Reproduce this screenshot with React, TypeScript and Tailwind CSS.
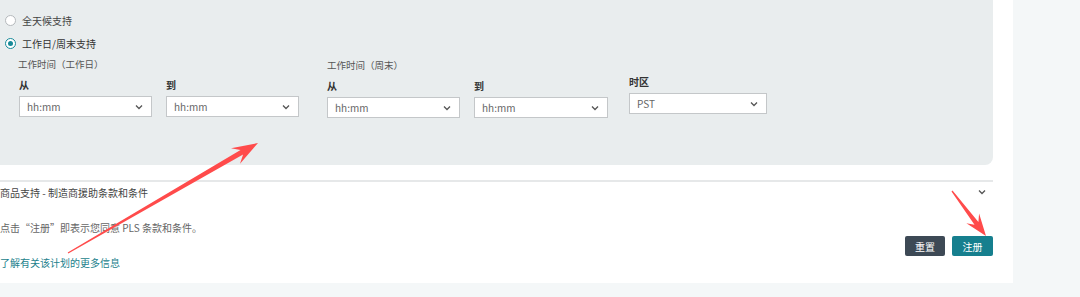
import React from 'react';

const font = { fontFamily: '"Noto Sans CJK SC", "Noto Sans", sans-serif' };

function Chevron({ className = '' }: { className?: string }) {
  return (
    <svg width="8" height="6" viewBox="0 0 8 6" className={className}>
      <polyline points="1,1.5 4,4.5 7,1.5" fill="none" stroke="#555" strokeWidth="1.3" />
    </svg>
  );
}

function TimeSelect({ value, width }: { value: string; width: string }) {
  return (
    <div
      className={`${width} h-[21px] bg-white border border-[#c4c7c9] flex items-center justify-between pl-[7px] pr-[8px] text-[10px] text-[#666]`}
    >
      <span>{value}</span>
      <Chevron />
    </div>
  );
}

function Field({ label, value, width }: { label: string; value: string; width: string }) {
  return (
    <div className="flex flex-col">
      <div className="h-[12px] leading-[12px] text-[10px] font-bold text-[#333] mb-[5px]">{label}</div>
      <TimeSelect value={value} width={width} />
    </div>
  );
}

function Arrow({ tail, tip, head, half, neck }: { tail: [number, number]; tip: [number, number]; head: number; half: number; neck: number }) {
  const dx = tip[0] - tail[0];
  const dy = tip[1] - tail[1];
  const len = Math.hypot(dx, dy);
  const ux = dx / len;
  const uy = dy / len;
  const nx = -uy;
  const ny = ux;
  const p = (x: number, y: number) => `${x.toFixed(1)},${y.toFixed(1)}`;
  const nk = [tip[0] - ux * head * 0.72, tip[1] - uy * head * 0.72];
  const bk = [tip[0] - ux * head, tip[1] - uy * head];
  const pts = [
    p(tail[0] + nx * 0.6, tail[1] + ny * 0.6),
    p(nk[0] + nx * neck, nk[1] + ny * neck),
    p(bk[0] + nx * half, bk[1] + ny * half),
    p(tip[0], tip[1]),
    p(bk[0] - nx * half, bk[1] - ny * half),
    p(nk[0] - nx * neck, nk[1] - ny * neck),
    p(tail[0] - nx * 0.6, tail[1] - ny * 0.6),
  ].join(' ');
  return <polygon points={pts} fill="#ff4b4b" />;
}

export default function App() {
  return (
    <div className="relative w-[1080px] h-[297px] bg-[#f4f7f8] overflow-hidden" style={font}>
      <div className="w-[1013px] h-[283px] bg-white overflow-hidden pr-[20px]">
        {/* support hours panel */}
        <div className="h-[165px] bg-[#e9edee] rounded-br-[8px] pt-[13px] pl-[5px]">
          <label className="flex items-center h-[14px] gap-[6px] text-[10px] text-[#444]">
            <span className="w-[11px] h-[11px] rounded-full border border-[#b5b9bc] bg-white" />
            全天候支持
          </label>
          <label className="flex items-center h-[14px] gap-[6px] text-[10px] text-[#333] mt-[9px]">
            <span className="w-[11px] h-[11px] rounded-full border border-[#178a99] bg-white flex items-center justify-center">
              <span className="w-[5px] h-[5px] rounded-full bg-[#178a99]" />
            </span>
            工作日/周末支持
          </label>

          <div className="flex items-start mt-[8px] pl-[13px]">
            <div className="flex flex-col">
              <div className="h-[12px] leading-[12px] text-[9.5px] text-[#555] mb-[9px]">工作时间（工作日）</div>
              <div className="flex gap-[14px] pl-[1px]">
                <Field label="从" value="hh:mm" width="w-[133px]" />
                <Field label="到" value="hh:mm" width="w-[133px]" />
              </div>
            </div>
            <div className="flex flex-col ml-[28px]">
              <div className="h-[12px] leading-[12px] text-[9.5px] text-[#555] mb-[9px] mt-[1px]">工作时间（周末）</div>
              <div className="flex gap-[14px]">
                <Field label="从" value="hh:mm" width="w-[133px]" />
                <Field label="到" value="hh:mm" width="w-[134px]" />
              </div>
            </div>
            <div className="flex flex-col ml-[21px] mt-[18px]">
              <Field label="时区" value="PST" width="w-[138px]" />
            </div>
          </div>
        </div>

        {/* terms section */}
        <div className="mt-[15px] border-t-2 border-[#e6e8e9]">
          <div className="flex items-center justify-between h-[20px] pr-[7px]">
            <span className="text-[10px] text-[#444]">商品支持 - 制造商援助条款和条件</span>
            <Chevron />
          </div>
          <div className="flex items-start justify-between">
            <div className="flex flex-col">
              <p className="mt-[20px] h-[12px] leading-[12px] text-[10px] text-[#666]">
                点击“注册”即表示您同意 PLS 条款和条件。
              </p>
              <a className="mt-[23px] h-[12px] leading-[12px] text-[10px] text-[#1b7f8c]">了解有关该计划的更多信息</a>
            </div>
            <div className="flex gap-[7px] mt-[34px]">
              <button className="w-[40px] h-[20px] rounded-[2px] bg-[#3d4955] text-white text-[10px]">重置</button>
              <button className="w-[41px] h-[20px] rounded-[2px] bg-[#167f8e] text-white text-[10px]">注册</button>
            </div>
          </div>
        </div>
      </div>

      {/* annotation arrows */}
      <svg className="absolute inset-0 pointer-events-none" width="1080" height="297">
        <Arrow tail={[68, 253]} tip={[258, 143]} head={26} half={9} neck={2.6} />
        <Arrow tail={[952, 191]} tip={[986, 236]} head={22} half={8} neck={2.4} />
      </svg>
    </div>
  );
}
